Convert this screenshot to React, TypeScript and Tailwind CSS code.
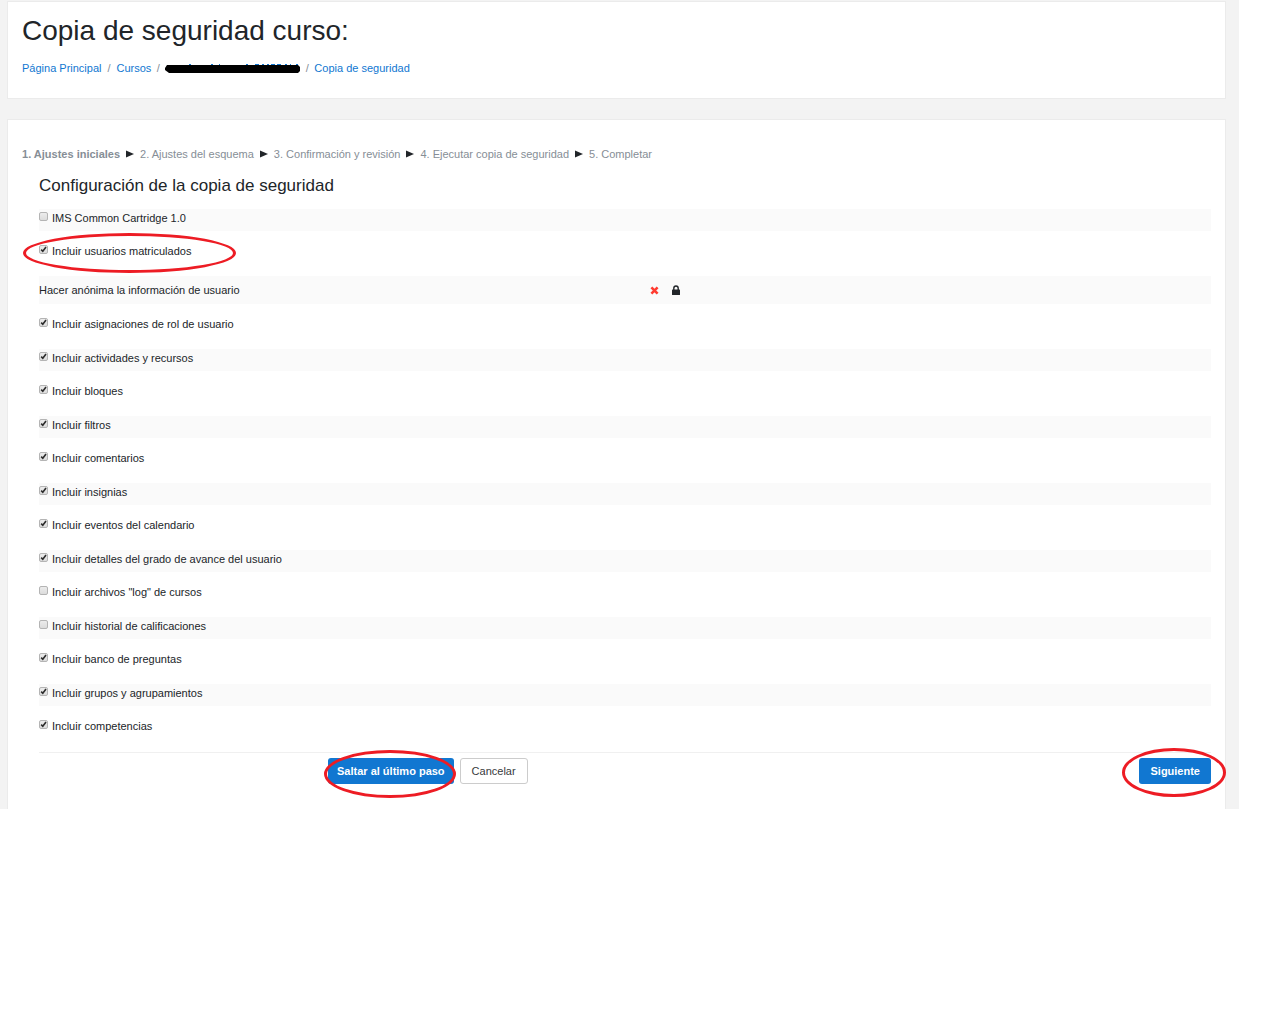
import { ReactNode } from 'react';

const steps = [
  'Ajustes iniciales',
  'Ajustes del esquema',
  'Confirmación y revisión',
  'Ejecutar copia de seguridad',
  'Completar',
];

const settings = [
  { id: 'rol', label: 'Incluir asignaciones de rol de usuario', checked: true },
  { id: 'actividades', label: 'Incluir actividades y recursos', checked: true },
  { id: 'bloques', label: 'Incluir bloques', checked: true },
  { id: 'filtros', label: 'Incluir filtros', checked: true },
  { id: 'comentarios', label: 'Incluir comentarios', checked: true },
  { id: 'insignias', label: 'Incluir insignias', checked: true },
  { id: 'calendario', label: 'Incluir eventos del calendario', checked: true },
  { id: 'avance', label: 'Incluir detalles del grado de avance del usuario', checked: true },
  { id: 'log', label: 'Incluir archivos "log" de cursos', checked: false },
  { id: 'historial', label: 'Incluir historial de calificaciones', checked: false },
  { id: 'preguntas', label: 'Incluir banco de preguntas', checked: true },
  { id: 'grupos', label: 'Incluir grupos y agrupamientos', checked: true },
  { id: 'competencias', label: 'Incluir competencias', checked: true },
];

function Highlight({ className }: { className: string }) {
  return (
    <span
      aria-hidden="true"
      className={`pointer-events-none absolute rounded-[50%] border-[3px] border-[#ed1c24] ${className}`}
    />
  );
}

type SettingProps = { id: string; label: string; checked: boolean; shaded: boolean; children?: ReactNode };

function Setting({ id, label, checked, shaded, children }: SettingProps) {
  return (
    <div className={`relative flex items-start ${shaded ? 'h-[22px] bg-[#fafafa]' : 'h-[23px]'}`}>
      <span className="relative mt-[3px] mr-1 size-[9px] shrink-0">
        <input
          id={id}
          type="checkbox"
          defaultChecked={checked}
          className="peer block size-[9px] appearance-none rounded-xs border border-[#b4b4b4] bg-linear-to-b from-[#ececec] to-[#dcdcdc]"
        />
        <svg
          viewBox="0 0 9 9"
          className="pointer-events-none absolute inset-0 hidden size-[9px] peer-checked:block"
          fill="none"
          stroke="#2b2b2b"
          strokeWidth="1.6"
        >
          <path d="M2.2 4.6 3.8 6.2 7 2" />
        </svg>
      </span>
      <label htmlFor={id} className="leading-[18px]">
        {label}
      </label>
      {children}
    </div>
  );
}

function Breadcrumb() {
  return (
    <nav className="mt-3 flex items-center leading-4 text-[#1177d1]">
      <a href="#inicio">Página Principal</a>
      <span className="w-[15px] text-center text-[#868e96]">/</span>
      <a href="#cursos">Cursos</a>
      <span className="w-[14px] text-center text-[#868e96]">/</span>
      <a href="#curso" aria-label="Curso">
        <svg width="135" height="10" viewBox="0 0 135 10" className="block">
          <path
            d="M24 1.5h2M46 1.5h2M54 1.5h1M81 1.5h2M90 1.5h4M97 1.5h2M102 1.5h2M106 1.5h4M112 1.5h4M120 1.5h2M125 1.5h1M131 1.5h2"
            stroke="#1177d1"
          />
          <path d="M2 2h131l2 2v4l-2 2H4L0 7V5z" fill="#000" />
        </svg>
      </a>
      <span className="w-[14px] text-center text-[#868e96]">/</span>
      <a href="#copia">Copia de seguridad</a>
    </nav>
  );
}

export default function App() {
  return (
    <div className="mr-[41px] bg-[#f3f3f3] pt-px pr-[13px] pl-[7px] font-['Liberation_Sans',Arial,sans-serif] text-[11px] text-[#212529]">
      <header className="border border-[#ebebeb] bg-white px-3.5 pt-3 pb-[22px]">
        <h1 className="text-[28px] leading-[34px]">Copia de seguridad curso:</h1>
        <Breadcrumb />
      </header>

      <main className="mt-5 border border-b-0 border-[#ebebeb] bg-white px-3.5 pt-[26px] pb-[25px]">
        <ol className="flex items-center leading-4 text-[#868e96]">
          {steps.map((step, index) => (
            <li key={step} className={index === 0 ? 'flex items-center font-bold' : 'flex items-center'}>
              {index > 0 && (
                <svg viewBox="0 0 8 8" className="mx-1.5 h-2 w-2" fill="#212529">
                  <path d="M0 .5 8 4 0 7.5z" />
                </svg>
              )}
              {index + 1}. {step}
            </li>
          ))}
        </ol>

        <form className="pl-[17px]" onSubmit={(e) => e.preventDefault()}>
          <h2 className="mt-3.5 text-[17px] leading-5">Configuración de la copia de seguridad</h2>

          <div className="mt-[13px] flex flex-col gap-[11px]">
            <Setting id="ims" label="IMS Common Cartridge 1.0" checked={false} shaded />
            <Setting id="usuarios" label="Incluir usuarios matriculados" checked shaded={false}>
              <Highlight className="-top-[9px] -left-4 h-10 w-[213px]" />
            </Setting>
            <div className="flex h-7 items-center bg-[#fafafa]">
              <span className="w-[52%]">Hacer anónima la información de usuario</span>
              <svg viewBox="0 0 11 11" className="mx-px size-[11px]" role="img" aria-label="No">
                <path d="M2.4 2.4 8.6 8.6M8.6 2.4 2.4 8.6" stroke="#ff3b30" strokeWidth="2.6" />
              </svg>
              <svg viewBox="0 0 10 11" className="ml-2.5 h-[11px] w-[10px]" role="img" aria-label="Bloqueado">
                <path d="M2.8 5V3.2a2.2 2.2 0 0 1 4.4 0V5" fill="none" stroke="#212529" strokeWidth="1.4" />
                <rect x="1" y="4.6" width="8" height="5.4" rx=".6" fill="#212529" />
              </svg>
            </div>
            {settings.map((setting, index) => (
              <Setting key={setting.id} {...setting} shaded={index % 2 === 1} />
            ))}
          </div>

          <hr className="mt-3 border-[#f0f0f0]" />

          <div className="mt-[5px] flex gap-1.5 pl-[289px]">
            <div className="relative">
              <button type="submit" className="h-[26px] rounded-[3px] bg-[#1177d1] px-[9px] font-bold text-white">
                Saltar al último paso
              </button>
              <Highlight className="-top-2 -right-0.5 -bottom-3.5 -left-1" />
            </div>
            <button type="button" className="h-[26px] rounded-[3px] border border-[#ccc] px-[11px] text-[#373a3c]">
              Cancelar
            </button>
            <div className="relative ml-auto">
              <button type="submit" className="h-[26px] rounded-[3px] bg-[#1177d1] px-[11px] font-bold text-white">
                Siguiente
              </button>
              <Highlight className="-top-2.5 -right-[15px] -bottom-[13px] -left-[17px]" />
            </div>
          </div>
        </form>
      </main>
    </div>
  );
}
